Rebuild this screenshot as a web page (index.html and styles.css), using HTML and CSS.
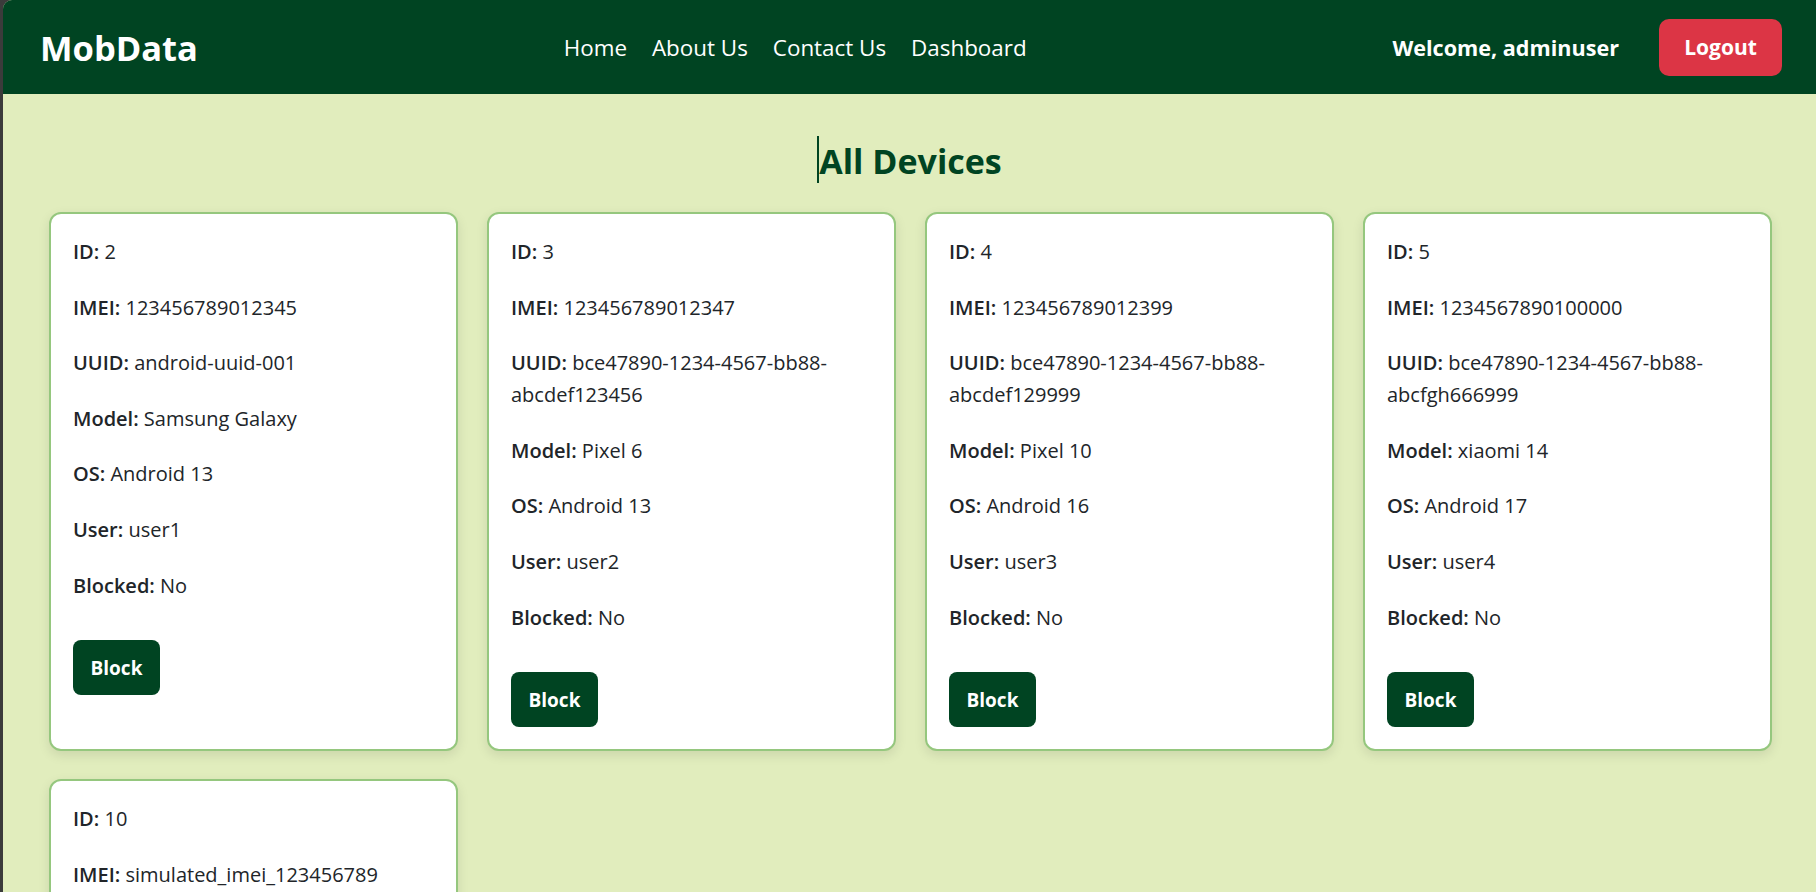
FILE: index.html
```html
<!DOCTYPE html>
<html lang="en">
<head>
<meta charset="utf-8">
<title>MobData - All Devices</title>
<link rel="stylesheet" href="styles.css">
</head>
<body>
<div class="app">
  <header class="navbar">
    <div class="brand">MobData</div>
    <nav class="nav-links">
      <a href="#">Home</a>
      <a href="#">About Us</a>
      <a href="#">Contact Us</a>
      <a href="#">Dashboard</a>
    </nav>
    <div class="user-area">
      <span class="welcome">Welcome, adminuser</span>
      <button class="logout">Logout</button>
    </div>
  </header>
  <main class="content">
    <h2 class="page-title"><span class="caret"></span>All Devices</h2>
    <div class="grid">
      <div class="card">
        <p><b>ID:</b> 2</p>
        <p><b>IMEI:</b> 123456789012345</p>
        <p><b>UUID:</b> android-uuid-001</p>
        <p><b>Model:</b> Samsung Galaxy</p>
        <p><b>OS:</b> Android 13</p>
        <p><b>User:</b> user1</p>
        <p><b>Blocked:</b> No</p>
        <button class="block-btn">Block</button>
      </div>
      <div class="card">
        <p><b>ID:</b> 3</p>
        <p><b>IMEI:</b> 123456789012347</p>
        <p><b>UUID:</b> bce47890-1234-4567-bb88-abcdef123456</p>
        <p><b>Model:</b> Pixel 6</p>
        <p><b>OS:</b> Android 13</p>
        <p><b>User:</b> user2</p>
        <p><b>Blocked:</b> No</p>
        <button class="block-btn">Block</button>
      </div>
      <div class="card">
        <p><b>ID:</b> 4</p>
        <p><b>IMEI:</b> 123456789012399</p>
        <p><b>UUID:</b> bce47890-1234-4567-bb88-abcdef129999</p>
        <p><b>Model:</b> Pixel 10</p>
        <p><b>OS:</b> Android 16</p>
        <p><b>User:</b> user3</p>
        <p><b>Blocked:</b> No</p>
        <button class="block-btn">Block</button>
      </div>
      <div class="card">
        <p><b>ID:</b> 5</p>
        <p><b>IMEI:</b> 1234567890100000</p>
        <p><b>UUID:</b> bce47890-1234-4567-bb88-abcfgh666999</p>
        <p><b>Model:</b> xiaomi 14</p>
        <p><b>OS:</b> Android 17</p>
        <p><b>User:</b> user4</p>
        <p><b>Blocked:</b> No</p>
        <button class="block-btn">Block</button>
      </div>
      <div class="card">
        <p><b>ID:</b> 10</p>
        <p><b>IMEI:</b> simulated_imei_123456789</p>
        <p><b>UUID:</b> simulated_uuid</p>
        <p><b>Model:</b> Simulated</p>
        <p><b>OS:</b> Android</p>
        <p><b>User:</b> user5</p>
        <p><b>Blocked:</b> No</p>
        <button class="block-btn">Block</button>
      </div>
    </div>
  </main>
</div>
</body>
</html>
```
FILE: styles.css
```css
html, body {
  margin: 0;
  padding: 0;
}
body {
  background: #3b3b3b;
  font-family: "Open Sans", "Noto Sans", sans-serif;
}
.app {
  margin-left: 3px;
  min-height: 100vh;
  background: #e1edbd;
  border-top-left-radius: 9px;
  overflow: hidden;
}
.navbar {
  height: 94px;
  box-sizing: border-box;
  background: #004422;
  display: flex;
  align-items: center;
  justify-content: space-between;
  padding: 0 34px 0 37px;
  color: #ffffff;
}
.brand {
  font-size: 34.5px;
  font-weight: 700;
}
.nav-links {
  display: flex;
  gap: 25px;
}
.nav-links a {
  color: #ffffff;
  text-decoration: none;
  font-size: 22.4px;
}
.user-area {
  display: flex;
  align-items: center;
  gap: 40px;
}
.welcome {
  font-size: 21.6px;
  font-weight: 700;
}
.logout {
  background: #dc3545;
  color: #ffffff;
  border: none;
  border-radius: 10px;
  font-family: inherit;
  font-size: 21px;
  font-weight: 700;
  width: 123px;
  height: 57px;
  padding: 0;
}
.content {
  padding: 0 44px 40px 46px;
}
.page-title {
  margin: 42px 0 29px;
  text-align: center;
  font-size: 34px;
  line-height: 42px;
  font-weight: 700;
  color: #004422;
}
.caret {
  display: inline-block;
  width: 2px;
  height: 47px;
  background: #004422;
  vertical-align: -9px;
  margin-left: -2px;
}
.grid {
  display: grid;
  grid-template-columns: repeat(4, 1fr);
  column-gap: 29px;
  row-gap: 28px;
}
.card {
  background: #ffffff;
  border: 2px solid #95c77e;
  border-radius: 12px;
  padding: 22px;
  box-shadow: 0 4px 12px rgba(0, 0, 0, 0.1);
  color: #212529;
  font-size: 20px;
}
.card p {
  margin: 0 0 23.6px;
  line-height: 32px;
}
.card b {
  font-weight: 600;
}
.block-btn {
  margin-top: 15px;
  background: #004422;
  color: #ffffff;
  border: none;
  border-radius: 8px;
  font-family: inherit;
  font-size: 19px;
  font-weight: 700;
  width: 87px;
  height: 55px;
  padding: 0;
}
```
